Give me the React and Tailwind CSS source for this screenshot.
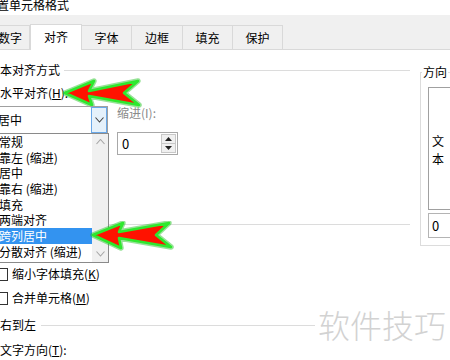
import React from "react";

function Arrow({ className, w, h, points }) {
  return (
    <svg className={className} width={w} height={h} viewBox={`0 0 ${w} ${h}`}>
      <polygon points={points} fill="none" stroke="#1bbf1b" strokeOpacity="0.45" strokeWidth="5.5" strokeLinejoin="round" />
      <polygon points={points} fill="#ff1200" stroke="#2ee82e" strokeWidth="2.6" strokeLinejoin="round" />
    </svg>
  );
}

function ChevronDown({ color = "#444", w = 9, h = 5 }) {
  return (
    <svg width={w} height={h + 1} viewBox={`0 0 ${w} ${h + 1}`}>
      <polyline points={`0.5,0.5 ${w / 2},${h} ${w - 0.5},0.5`} fill="none" stroke={color} strokeWidth="1.1" />
    </svg>
  );
}

function ChevronUp({ color = "#a6a6a6", w = 9, h = 5 }) {
  return (
    <svg width={w} height={h + 1} viewBox={`0 0 ${w} ${h + 1}`}>
      <polyline points={`0.5,${h} ${w / 2},0.5 ${w - 0.5},${h}`} fill="none" stroke={color} strokeWidth="1.1" />
    </svg>
  );
}

const items = ["常规", "靠左 (缩进)", "居中", "靠右 (缩进)", "填充", "两端对齐", "跨列居中", "分散对齐 (缩进)"];

export default function App() {
  return (
    <div className="relative w-[450px] h-[360px] overflow-hidden bg-white text-black text-[12px] leading-[14px] whitespace-nowrap font-['Noto_Sans_CJK_SC','Noto_Sans',sans-serif]">
      {/* title */}
      <div className="h-[15px] overflow-hidden">
        <div className="-mt-[2px] -ml-[3px]">置单元格格式</div>
      </div>

      {/* tabs */}
      <div className="h-[35px] bg-[#f0f0f0] flex items-end border-b border-[#d9d9d9]">
        <div className="w-[30px] shrink-0 h-[24px] border-t border-r border-[#d9d9d9] flex items-center justify-end pr-[7px] overflow-hidden">数字</div>
        <div className="w-[52px] shrink-0 h-[26px] -mb-px bg-white border-t border-x border-[#d9d9d9] flex items-center justify-center pb-[1px]">对齐</div>
        <div className="w-[50px] shrink-0 h-[24px] border-t border-r border-[#d9d9d9] flex items-center justify-center">字体</div>
        <div className="w-[51px] shrink-0 h-[24px] border-t border-r border-[#d9d9d9] flex items-center justify-center">边框</div>
        <div className="w-[50px] shrink-0 h-[24px] border-t border-r border-[#d9d9d9] flex items-center justify-center">填充</div>
        <div className="w-[50px] shrink-0 h-[24px] border-t border-r border-[#d9d9d9] flex items-center justify-center">保护</div>
      </div>

      {/* content */}
      <div className="flex">
        <div className="w-[420px] shrink-0 pr-[10px] flex flex-col">
          <div className="mt-[13px] flex items-center h-[14px]">
            <span className="-ml-[12px]">文本对齐方式</span>
            <div className="flex-1 h-px bg-[#dcdcdc] ml-[4px]" />
          </div>

          <div className="mt-[9px] h-[14px] relative">
            <span>水平对齐(<span className="underline">H</span>):</span>
            <Arrow className="absolute -top-[8px] left-[62px]" w={80} h={30} points="3,15 32,3 27,13 76,3 62,15 77,27 27,18 30,27" />
          </div>

          <div className="mt-[6px] flex">
            <div className="relative w-[108px] h-[27px] border-t border-r border-[#a0a0a0] flex items-center">
              <span className="flex-1 -ml-[2px]">居中</span>
              <div className="w-[16px] self-stretch bg-[#e5f1fb] border border-[#6aa8e8] flex items-center justify-center">
                <ChevronDown />
              </div>
              {/* dropdown list */}
              <div className="absolute top-[26px] -left-[2px] w-[111px] h-[130px] bg-white border border-[#8a8a8a] flex">
                <div className="flex-1 flex flex-col">
                  {items.map((t, i) => (
                    <div
                      key={t}
                      className={
                        "h-[15.7px] flex items-center " +
                        (i === 6 ? "bg-[#3393f0] text-white" : "")
                      }
                    >
                      {t}
                    </div>
                  ))}
                </div>
                <div className="w-[16px] bg-[#f0f0f0] flex flex-col items-center justify-between py-[5px]">
                  <ChevronUp />
                  <ChevronDown color="#a6a6a6" />
                </div>
              </div>
            </div>
            <div className="ml-[9px] flex flex-col">
              <span className="text-[#8a8a8a]">缩进(I):</span>
              <div className="mt-[12px] w-[61px] h-[23px] border border-[#a8a8a8] flex">
                <span className="flex-1 pl-[4px] flex items-center text-[13px]">0</span>
                <div className="w-[15px] my-[1px] mr-[1px] flex flex-col border border-[#c8c8c8] bg-[#f0f0f0]">
                  <div className="flex-1 flex items-center justify-center border-b border-[#c8c8c8]">
                    <svg width="7" height="4" viewBox="0 0 7 4"><polygon points="0,4 3.5,0 7,4" fill="#222" /></svg>
                  </div>
                  <div className="flex-1 flex items-center justify-center">
                    <svg width="7" height="4" viewBox="0 0 7 4"><polygon points="0,0 3.5,4 7,0" fill="#222" /></svg>
                  </div>
                </div>
              </div>
            </div>
          </div>

          <div className="mt-[62px] flex items-center h-[14px]">
            <span>文本控制</span>
            <div className="flex-1 h-px bg-[#dcdcdc] ml-[4px]" />
          </div>

          <div className="mt-[36px] h-[14px] flex items-center">
            <div className="-ml-[5px] w-[13px] h-[13px] border border-[#333]" />
            <span className="ml-[4px]">缩小字体填充(<span className="underline">K</span>)</span>
          </div>
          <div className="mt-[10px] h-[14px] flex items-center">
            <div className="-ml-[5px] w-[13px] h-[13px] border border-[#333]" />
            <span className="ml-[4px]">合并单元格(<span className="underline">M</span>)</span>
          </div>

          <div className="mt-[13px] flex items-center h-[14px]">
            <span>右到左</span>
            <div className="flex-1 h-px bg-[#dcdcdc] ml-[5px]" />
          </div>
          <div className="mt-[11px] h-[14px]">
            文字方向(<span className="underline">T</span>):
          </div>
        </div>

        {/* right group */}
        <div className="flex-1 min-w-0">
          <div className="relative mt-[22px] h-[174px] border-l border-t border-b border-[#dcdcdc] pl-[7px] pt-[14px]">
            <span className="absolute -top-[8px] left-[1px] bg-white px-[1px]">方向</span>
            <div className="w-[30px] h-[123px] border border-[#a0a0a0] flex flex-col items-center justify-center pr-[10px] leading-[18px] pt-[3px]">
              <span>文</span>
              <span>本</span>
            </div>
            <div className="mt-[3px] w-[30px] h-[25px] border border-[#b4b4b4] flex items-center pl-[3px] text-[13px]">0</div>
          </div>
        </div>
      </div>

      <Arrow className="absolute left-[90px] top-[221px]" w={84} h={30} points="3,14 33,2 29,11 79,2 66,14 81,26 29,17 31,27" />

      <div className="absolute left-[315px] top-[302px] bg-white pl-[3px] pr-[10px] text-[32px] leading-[44px] text-[#d2d2d2] font-light">
        软件技巧
      </div>
    </div>
  );
}
